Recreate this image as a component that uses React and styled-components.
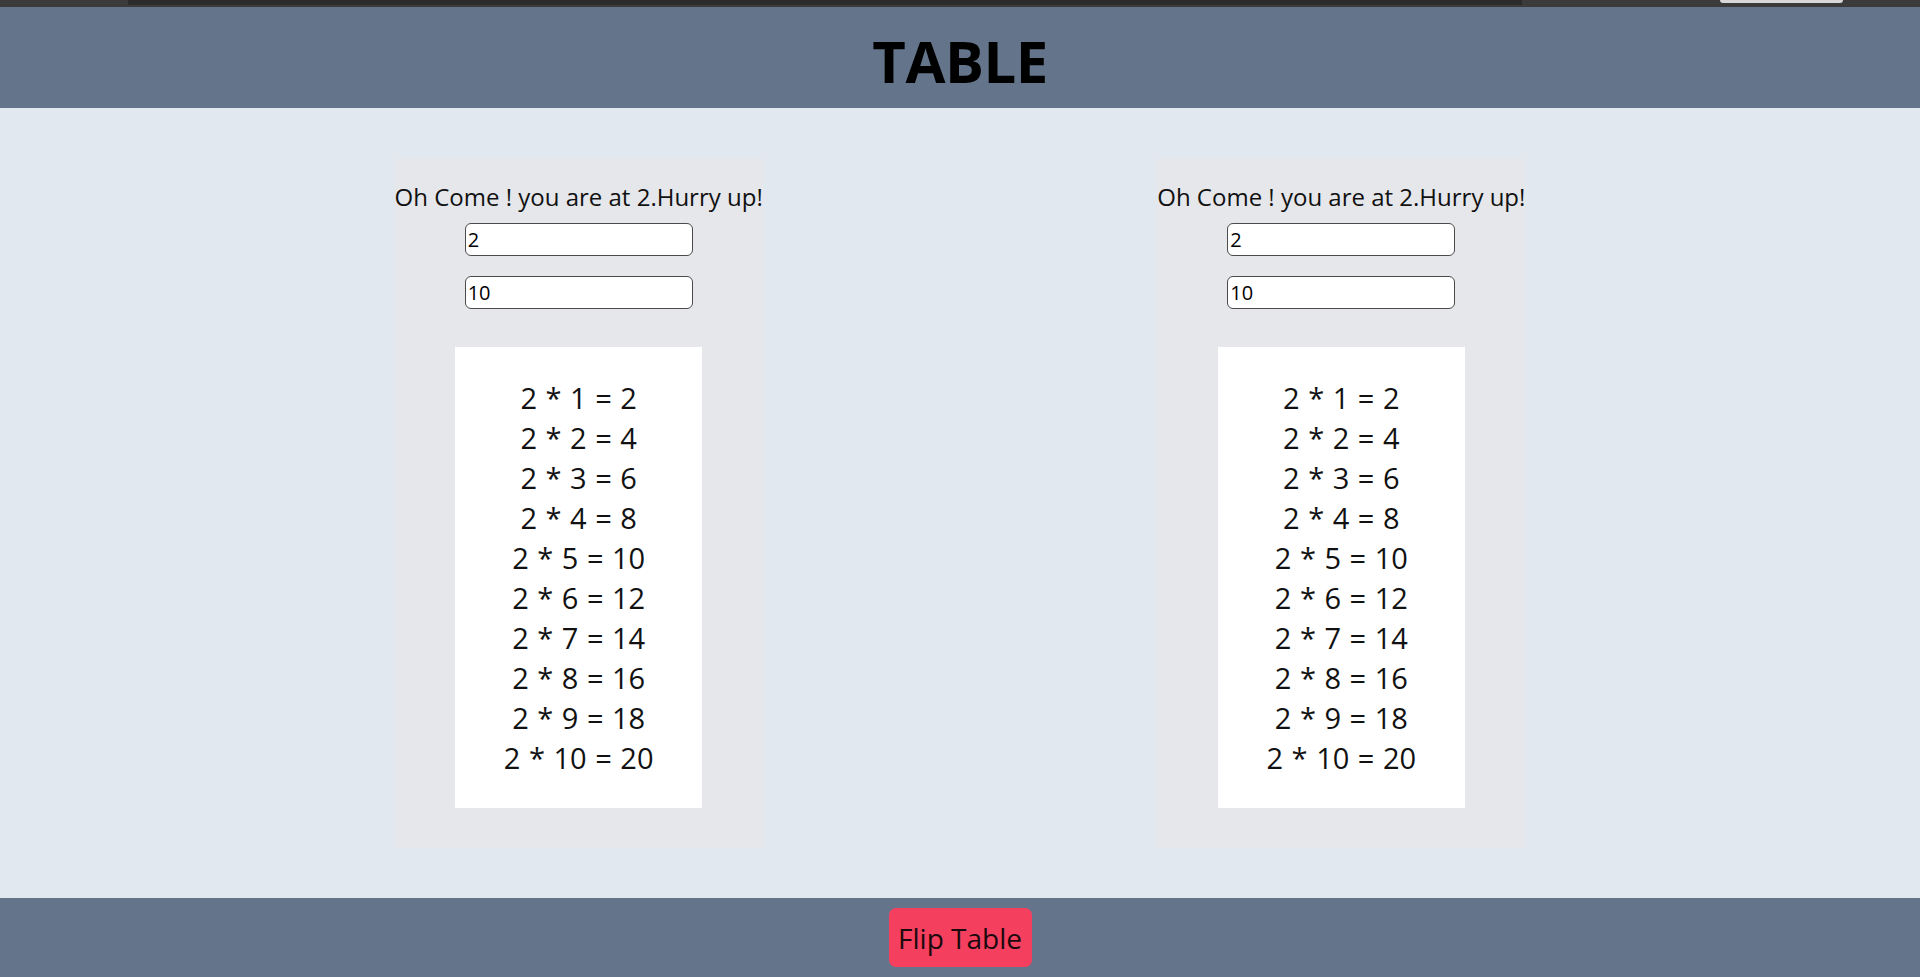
import React from 'react'
import styled, { createGlobalStyle } from 'styled-components'

const GlobalStyle = createGlobalStyle`
  html, body {
    margin: 0;
    padding: 0;
  }
  body {
    font-family: "Open Sans", "Noto Sans", sans-serif;
    color: #000;
  }
`

function TablePanel({ number, upto }) {
  const rows = []
  for (let i = 1; i <= upto; i++) {
    rows.push(
      <Row key={i}>
        {number} * {i} = {number * i}
      </Row>
    )
  }
  return (
    <Panel>
      <Status>Oh Come ! you are at {number}.Hurry up!</Status>
      <NumberInput type="text" defaultValue={number} />
      <NumberInput type="text" defaultValue={upto} />
      <ResultBox>{rows}</ResultBox>
    </Panel>
  )
}

export default function App() {
  return (
    <Page>
      <GlobalStyle />
      <Chrome>
        <ChromeTab />
        <ChromePill />
      </Chrome>
      <Header>
        <Title>TABLE</Title>
      </Header>
      <Main>
        <TablePanel number={2} upto={10} />
        <TablePanel number={2} upto={10} />
      </Main>
      <Footer>
        <FlipButton>Flip Table</FlipButton>
      </Footer>
    </Page>
  )
}

const Page = styled.div`
min-height:100vh;
display:flex;
flex-direction:column;
`
const Chrome = styled.div`
height:7px;
background-color:#3b3b3b;
display:flex;
align-items:flex-start;
padding-left:128px;
padding-right:77px;
`
const ChromeTab = styled.div`
width:1394px;
height:5px;
background-color:#2b2b2b;
`
const ChromePill = styled.div`
margin-left:auto;
width:123px;
height:3px;
background-color:#d8d8d8;
border-radius:0 0 4px 4px;
`
const Header = styled.header`
height:101px;
background-color:#64748b;
display:flex;
align-items:center;
justify-content:center;
`
const Title = styled.h1`
margin:6px 0 0 0;
font-size:58px;
font-weight:700;
line-height:1;
letter-spacing:-0.5px;
`
const Main = styled.main`
flex:1;
background-color:#e2e8f0;
display:flex;
align-items:center;
justify-content:space-evenly;
`
const Panel = styled.section`
width:368px;
background-color:#e5e7eb;
display:flex;
flex-direction:column;
align-items:center;
padding:22px 0 40px 0;
`
const Status = styled.div`
font-size:24px;
line-height:32px;
white-space:nowrap;
color:#111;
`
const NumberInput = styled.input`
box-sizing:border-box;
width:228px;
height:33px;
margin-top:10px;
padding:0 2px;
border:1px solid #4b4b4b;
border-radius:6px;
background-color:#fff;
font-family:"Open Sans", sans-serif;
font-size:20px;
color:#000;
outline:none;
& + & {
  margin-top:20px;
}
`
const ResultBox = styled.div`
box-sizing:border-box;
width:247px;
margin-top:38px;
padding:31px 0 30px 0;
background-color:#fff;
display:flex;
flex-direction:column;
align-items:center;
`
const Row = styled.div`
font-size:29px;
line-height:40px;
white-space:pre;
word-spacing:1px;
color:#111;
`
const Footer = styled.footer`
height:79px;
background-color:#64748b;
display:flex;
align-items:center;
justify-content:center;
`
const FlipButton = styled.button`
box-sizing:border-box;
width:143px;
height:59px;
border:none;
border-radius:7px;
background-color:#f43f5e;
color:#1a0a0d;
font-family:"Open Sans", sans-serif;
font-size:28px;
cursor:pointer;
padding:0;
`
